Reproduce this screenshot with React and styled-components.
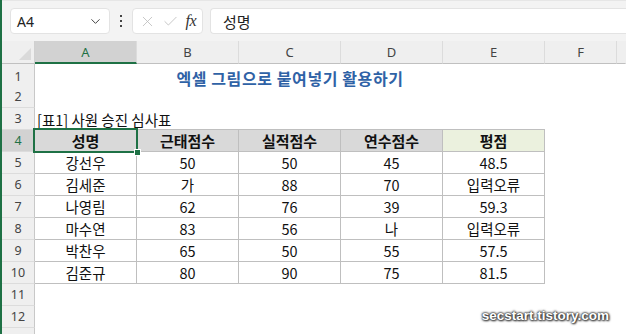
import React from "react";
import styled, { createGlobalStyle } from "styled-components";
import { ChevronDown, X, Check } from "lucide-react";

const Global = createGlobalStyle`
  html, body { margin: 0; padding: 0; background: #fff; }
  body { width: 626px; height: 334px; overflow: hidden; }
  #root { height: 334px; }
`;

const KR = `"Noto Sans CJK KR", "Noto Sans", sans-serif`;
const UI = `"Noto Sans", "Open Sans", sans-serif`;
const TEMPLATE = "33px repeat(5, 102px) 72px 1fr";

const Window = styled.div`
  position: relative;
  height: 334px;
  border-left: 2px solid #1e7145;
  display: flex;
  flex-direction: column;
  overflow: hidden;
  background: #fff;
`;

const FormulaBar = styled.div`
  height: 41px;
  box-sizing: border-box;
  flex: none;
  display: flex;
  align-items: flex-start;
  padding: 7px 0 0 8px;
  background: #f3f3f3;
  border-top: 1px solid #e6e6e6;
`;

const Box = styled.div`
  height: 26px;
  box-sizing: border-box;
  background: #fff;
  border: 1px solid #e3e3e3;
  border-radius: 4px;
  display: flex;
  align-items: center;
`;

const NameBox = styled(Box)`
  width: 100px;
  padding: 0 6px 0 6px;
  justify-content: space-between;
  font-family: ${UI};
  font-size: 14px;
  color: #222;
`;

const Dots = styled.div`
  width: 22px;
  height: 26px;
  display: flex;
  align-items: center;
  justify-content: center;
`;

const FxBox = styled(Box)`
  width: 71px;
  padding: 0 6px 0 6px;
  justify-content: space-between;
  color: #b8b8b8;
`;

const Fx = styled.span`
  font-family: "Liberation Serif", serif;
  font-style: italic;
  font-size: 16px;
  color: #333;
  letter-spacing: -0.5px;
`;

const Input = styled(Box)`
  flex: 1;
  margin-left: 7px;
  border-right: none;
  border-radius: 4px 0 0 4px;
  padding-left: 12px;
  font-family: ${KR};
  font-size: 15px;
  color: #222;
`;

const Row = styled.div`
  display: grid;
  grid-template-columns: ${TEMPLATE};
  height: ${(p) => p.$h || 22}px;
  flex: none;
`;

const Corner = styled.div`
  background: #efefef;
  border-right: 1px solid #d0d0d0;
  border-bottom: 1px solid #c0c0c0;
  position: relative;
  &::after {
    content: "";
    position: absolute;
    right: 3px;
    bottom: 3px;
    width: 0;
    height: 0;
    border-left: 12px solid transparent;
    border-bottom: 12px solid #dadada;
  }
`;

const ColHead = styled.div`
  box-sizing: border-box;
  background: ${(p) => (p.$sel ? "#d2d2d2" : "#efefef")};
  border-right: 1px solid ${(p) => (p.$last ? "transparent" : "#dcdcdc")};
  border-bottom: ${(p) => (p.$sel ? "2px solid #1e7145" : "1px solid #c0c0c0")};
  display: flex;
  align-items: center;
  justify-content: center;
  padding-top: ${(p) => (p.$sel ? 1 : 0)}px;
  font-family: ${UI};
  font-size: 13px;
  color: ${(p) => (p.$sel ? "#1e7145" : "#444")};
`;

const RowHead = styled.div`
  box-sizing: border-box;
  background: ${(p) => (p.$sel ? "#d2d2d2" : "#efefef")};
  border-right: 1px solid #c8c8c8;
  border-bottom: 1px solid #dcdcdc;
  display: flex;
  align-items: center;
  justify-content: center;
  font-family: ${UI};
  font-size: 12.5px;
  color: ${(p) => (p.$sel ? "#1e7145" : "#444")};
`;

const Cell = styled.div`
  position: relative;
  box-sizing: border-box;
  display: flex;
  align-items: center;
  justify-content: ${(p) => (p.$left ? "flex-start" : "center")};
  padding-left: ${(p) => (p.$left ? 2 : 0)}px;
  white-space: nowrap;
  font-family: ${KR};
  font-size: ${(p) => (p.$head ? 15 : 14.5)}px;
  font-weight: ${(p) => (p.$head ? 700 : 400)};
  color: #111;
  background: ${(p) => p.$fill || "transparent"};
  border-right: ${(p) => (p.$table ? "1px solid #bfbfbf" : "none")};
  border-bottom: ${(p) => (p.$table ? "1px solid #bfbfbf" : "none")};
  box-shadow: ${(p) => (p.$top ? "0 -1px 0 #bfbfbf" : "none")};
  z-index: ${(p) => (p.$sel ? 2 : p.$left ? 1 : "auto")};
`;

const Selection = styled.div`
  position: absolute;
  left: -2px;
  top: -2px;
  right: -2px;
  bottom: -2px;
  border: 2px solid #1e7145;
  pointer-events: none;
  &::after {
    content: "";
    position: absolute;
    right: -5px;
    bottom: -5px;
    width: 5px;
    height: 5px;
    background: #1e7145;
    border: 1px solid #fff;
  }
`;

const Title = styled.div`
  grid-column: 3 / span 3;
  display: flex;
  align-items: center;
  justify-content: center;
  font-family: ${KR};
  font-size: 16px;
  font-weight: 700;
  color: #2f62a6;
  letter-spacing: 0.6px;
  padding-top: 2px;
`;

const Watermark = styled.div`
  position: absolute;
  right: 17px;
  bottom: 11px;
  font-family: "Liberation Sans", Arial, sans-serif;
  font-weight: 700;
  font-size: 13.5px;
  color: #fff;
  text-shadow: 0 0 2px #333, 0 0 2px #333, 1px 1px 2px #444, 0 0 3px #555;
`;

const cols = ["A", "B", "C", "D", "E", "F"];
const headers = ["성명", "근태점수", "실적점수", "연수점수", "평점"];
const data = [
  ["강선우", "50", "50", "45", "48.5"],
  ["김세준", "가", "88", "70", "입력오류"],
  ["나영림", "62", "76", "39", "59.3"],
  ["마수연", "83", "56", "나", "입력오류"],
  ["박찬우", "65", "50", "55", "57.5"],
  ["김준규", "80", "90", "75", "81.5"],
];

function EmptyCells({ n = 7 }) {
  return Array.from({ length: n }, (_, i) => <Cell key={i} />);
}

export default function App() {
  return (
    <>
      <Global />
      <Window>
        <FormulaBar>
          <NameBox>
            <span>A4</span>
            <ChevronDown size={15} strokeWidth={1.6} color="#444" />
          </NameBox>
          <Dots>
            <svg width="4" height="14" viewBox="0 0 4 14">
              <rect x="1" y="1" width="2" height="2" fill="#444" />
              <rect x="1" y="6" width="2" height="2" fill="#444" />
              <rect x="1" y="11" width="2" height="2" fill="#444" />
            </svg>
          </Dots>
          <FxBox>
            <X size={17} strokeWidth={1.1} />
            <Check size={17} strokeWidth={1.1} />
            <Fx>fx</Fx>
          </FxBox>
          <Input>성명</Input>
        </FormulaBar>

        <Row $h={23}>
          <Corner />
          {cols.map((c) => (
            <ColHead key={c} $sel={c === "A"}>
              {c}
            </ColHead>
          ))}
          <ColHead $last />
        </Row>

        <Row>
          <RowHead>1</RowHead>
          <Cell />
          <Title>엑셀 그림으로 붙여넣기 활용하기</Title>
          <Cell />
          <Cell />
          <Cell />
        </Row>
        <Row>
          <RowHead>2</RowHead>
          <EmptyCells />
        </Row>
        <Row>
          <RowHead>3</RowHead>
          <Cell $left>[표1] 사원 승진 심사표</Cell>
          <EmptyCells n={6} />
        </Row>
        <Row>
          <RowHead $sel>4</RowHead>
          {headers.map((h, i) => (
            <Cell
              key={h}
              $table
              $top
              $head
              $sel={i === 0}
              $fill={i === 4 ? "#ebf1de" : "#d9d9d9"}
            >
              {h}
              {i === 0 && <Selection />}
            </Cell>
          ))}
          <Cell />
          <Cell />
        </Row>
        {data.map((r, ri) => (
          <Row key={ri}>
            <RowHead>{ri + 5}</RowHead>
            {r.map((v, ci) => (
              <Cell key={ci} $table>
                {v}
              </Cell>
            ))}
            <Cell />
            <Cell />
          </Row>
        ))}
        {[11, 12].map((n) => (
          <Row key={n}>
            <RowHead>{n}</RowHead>
            <EmptyCells />
          </Row>
        ))}
        <Row>
          <RowHead />
          <EmptyCells />
        </Row>
        <Watermark>secstart.tistory.com</Watermark>
      </Window>
    </>
  );
}
